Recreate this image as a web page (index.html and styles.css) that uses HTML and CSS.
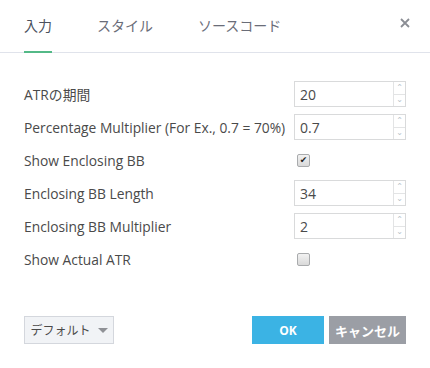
FILE: index.html
```html
<!DOCTYPE html>
<html lang="ja">
<head>
    <meta charset="UTF-8">
    <meta name="viewport" content="width=device-width, initial-scale=1.0">
    <title>入力</title>
    <link rel="stylesheet" href="styles.css">
</head>
<body>

<div class="dialog">

    <!-- Tabs -->
    <div class="tabs">
        <a class="tab active">入力</a>
        <a class="tab">スタイル</a>
        <a class="tab">ソースコード</a>
        <svg class="close" width="10" height="10" viewBox="0 0 10 10">
            <path d="M1 1 L9 9 M9 1 L1 9" stroke="#8a8d94" stroke-width="1.8" fill="none"/>
        </svg>
    </div>

    <!-- Inputs -->
    <div class="form">
        <label class="label">ATRの期間</label>
        <div class="spin"><span class="value">20</span><span class="arrows"><i>&#8963;</i><i>&#8964;</i></span></div>

        <label class="label">Percentage Multiplier (For Ex., 0.7 = 70%)</label>
        <div class="spin"><span class="value">0.7</span><span class="arrows"><i>&#8963;</i><i>&#8964;</i></span></div>

        <label class="label">Show Enclosing BB</label>
        <div class="check-cell"><span class="check checked">&#10004;</span></div>

        <label class="label">Enclosing BB Length</label>
        <div class="spin"><span class="value">34</span><span class="arrows"><i>&#8963;</i><i>&#8964;</i></span></div>

        <label class="label">Enclosing BB Multiplier</label>
        <div class="spin"><span class="value">2</span><span class="arrows"><i>&#8963;</i><i>&#8964;</i></span></div>

        <label class="label">Show Actual ATR</label>
        <div class="check-cell"><span class="check"></span></div>
    </div>

    <!-- Footer -->
    <div class="footer">
        <button class="btn default">デフォルト <span class="caret"></span></button>
        <div class="actions">
            <button class="btn ok">OK</button>
            <button class="btn cancel">キャンセル</button>
        </div>
    </div>

</div>

</body>
</html>
```

FILE: styles.css
```css
body {
    margin: 0;
    background: #fff;
    font-family: "Open Sans", "Noto Sans CJK JP", sans-serif;
    color: #4a4a4a;
}

.dialog { width: 430px; height: 368px; }

/* Tabs */
.tabs {
    display: flex;
    align-items: stretch;
    height: 52px;
    padding-left: 24px;
    border-bottom: 1px solid #e0e3eb;
    position: relative;
}

.tab {
    display: flex;
    align-items: center;
    margin-right: 45px;
    font-size: 14px;
    color: #6a6d78;
    padding-bottom: 2px;
    border-bottom: 2px solid transparent;
    margin-bottom: -1px;
}

.tab.active { color: #4c525e; border-bottom-color: #53b987; }

.close {
    position: absolute;
    right: 20px;
    top: 18px;
}

/* Form */
.form {
    display: grid;
    grid-template-columns: 270px 112px;
    grid-auto-rows: 26px;
    row-gap: 7px;
    padding: 28px 0 0 24px;
    font-size: 13.8px;
}

.label { display: flex; align-items: center; }

.spin {
    display: flex;
    border: 1px solid #d9dadb;
    box-sizing: border-box;
}

.spin .value {
    flex: 1;
    display: flex;
    align-items: center;
    padding-left: 5px;
    font-size: 14px;
    color: #4a4a4a;
}

.arrows {
    width: 11px;
    display: flex;
    flex-direction: column;
    border-left: 1px solid #e3e4e5;
}

.arrows i {
    flex: 1;
    display: flex;
    align-items: center;
    justify-content: center;
    font-style: normal;
    font-size: 8px;
    color: #b5c2c8;
    line-height: 1;
    font-family: "DejaVu Sans", sans-serif;
}

.arrows i + i { border-top: 1px solid #e3e4e5; }

.check-cell { display: flex; align-items: center; padding-left: 3px; }

.check {
    width: 11px;
    height: 11px;
    border: 1px solid #a9abad;
    border-radius: 2px;
    background: linear-gradient(#f2f2f2, #d9d9d9);
    font-size: 9px;
    line-height: 11px;
    text-align: center;
    color: #222;
    font-family: "DejaVu Sans", sans-serif;
}

/* Footer */
.footer {
    display: flex;
    justify-content: space-between;
    padding: 44px 24px 0 24px;
}

.actions { display: flex; gap: 5px; }

.btn {
    height: 28px;
    border: none;
    font-family: "Open Sans", "Noto Sans CJK JP", sans-serif;
    font-size: 13px;
    padding: 0;
}

.default {
    width: 90px;
    background: #f1f3f6;
    border: 1px solid #d4d7dd;
    color: #4a4a4a;
    font-size: 12px;
    display: flex;
    align-items: center;
    justify-content: center;
    gap: 7px;
}

.caret {
    width: 0;
    height: 0;
    border-left: 5px solid transparent;
    border-right: 5px solid transparent;
    border-top: 5px solid #8f9196;
}

.ok { width: 72px; background: #3bb3e4; color: #fff; font-weight: bold; font-size: 12px; }
.cancel { width: 77px; background: #9b9ea5; color: #fff; font-weight: bold; }
```
